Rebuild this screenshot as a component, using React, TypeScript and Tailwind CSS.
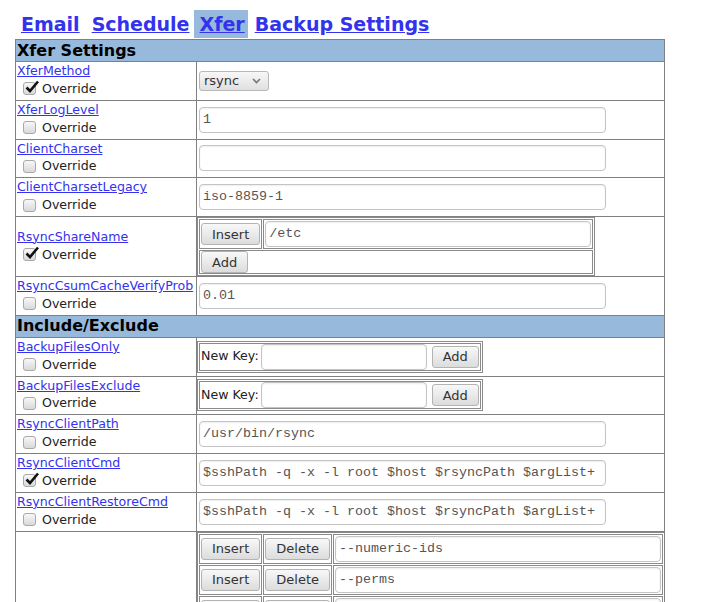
const SANS = "font-['DejaVu_Sans',Verdana,sans-serif]";
const MONO = "font-['Liberation_Mono',monospace]";
const LINK = "text-[#3333ee] underline";
const NEST = "border-separate border-spacing-[1px] border border-[#8a8a8a]";
const NCELL = "border border-[#8a8a8a] p-[1px]";

function Check({ on }: { on?: boolean }) {
  return (
    <span className="relative inline-block w-[13px] h-[13px] rounded-[3px] border border-[#a9a9a9] bg-gradient-to-b from-[#f7f7f7] to-[#d9d9d9]">
      {on && (
        <svg className="absolute -top-[4px] left-[1px]" width="15" height="15" viewBox="0 0 15 15">
          <path d="M1.5 8.5 L5 12 L13 2.5" fill="none" stroke="#111" strokeWidth="2.6" strokeLinejoin="miter" />
        </svg>
      )}
    </span>
  );
}

function Btn({ children }: { children: React.ReactNode }) {
  return (
    <span className="inline-flex items-center justify-center h-[22px] px-[10px] rounded-[3px] border border-[#b3b3b3] bg-gradient-to-b from-[#f8f8f8] to-[#dcdcdc] text-[#333] text-[13px] leading-none">
      {children}
    </span>
  );
}

function Field({ value, w }: { value: string; w: string }) {
  return (
    <div
      className={`${w} h-[26px] flex items-center px-[3px] rounded-[4px] border border-[#c4c4c4] bg-white ${MONO} text-[13.33px] text-[#555] shadow-[inset_0_1px_2px_rgba(0,0,0,0.07)] whitespace-pre`}
    >
      {value}
    </div>
  );
}

function Label({ name, on }: { name: string; on?: boolean }) {
  return (
    <td className="border border-[#808080] p-[1px] align-middle">
      <div className="leading-[16px]">
        <a className={LINK}>{name}</a>
      </div>
      <div className="flex items-center h-[19.75px] pl-[6px]">
        <Check on={on} />
        <span className="ml-[6px] leading-[16px]">Override</span>
      </div>
    </td>
  );
}

function Header({ title }: { title: string }) {
  return (
    <tr>
      <td colSpan={2} className="bg-[#96b9dc] border border-[#808080] px-[1px] h-[22px] text-[16px] font-bold leading-[20px] text-black">
        {title}
      </td>
    </tr>
  );
}

function TextRow({ name, value, on }: { name: string; value: string; on?: boolean }) {
  return (
    <tr>
      <Label name={name} on={on} />
      <td className="border border-[#808080] p-0 align-middle">
        <div className="ml-[2px]">
          <Field value={value} w="w-[407px]" />
        </div>
      </td>
    </tr>
  );
}

function NewKeyRow({ name }: { name: string }) {
  return (
    <tr>
      <Label name={name} />
      <td className="border border-[#808080] p-0 align-middle">
        <table className={NEST}>
          <tbody>
            <tr>
              <td className="border border-[#8a8a8a] px-[1px] py-0">
                <div className="flex items-center">
                  <span>New Key:</span>
                  <span className="ml-[2px]">
                    <Field value="" w="w-[166px]" />
                  </span>
                  <span className="ml-[5px]">
                    <Btn>Add</Btn>
                  </span>
                </div>
              </td>
            </tr>
          </tbody>
        </table>
      </td>
    </tr>
  );
}

const rsyncArgs = [
  "--numeric-ids",
  "--perms",
  "--owner",
  "--group",
  "-D",
  "--links",
  "--hard-links",
  "--times",
  "--block-size=2048",
  "--recursive",
];

export default function App() {
  return (
    <div className={`${SANS} text-[12.6px] text-[#222] bg-white min-h-screen`}>
      <div className="pt-[10px] pl-[21px] mb-[1px] flex items-center h-[38px] text-[19px] font-bold leading-[28px]">
        <a className={LINK}>Email</a>
        <a className={`${LINK} ml-[12px]`}>Schedule</a>
        <span className="ml-[4px] pl-[6px] pr-[3px] bg-[#96b9dc]">
          <a className={LINK}>Xfer</a>
        </span>
        <a className={`${LINK} ml-[7px]`}>Backup Settings</a>
      </div>

      <table className="ml-[15px] w-[650px] border-collapse table-fixed">
        <colgroup>
          <col className="w-[181px]" />
          <col />
        </colgroup>
        <tbody>
          <Header title="Xfer Settings" />
          <tr>
            <Label name="XferMethod" on />
            <td className="border border-[#808080] p-0 align-middle">
              <div className="ml-[2px] w-[70px] h-[20px] flex items-center justify-between pl-[4px] pr-[7px] rounded-[3px] border border-[#b8b8b8] bg-gradient-to-b from-[#f7f7f7] to-[#e0e0e0] text-[13px] text-[#333]">
                <span>rsync</span>
                <svg width="9" height="6" viewBox="0 0 9 6">
                  <path d="M1 1 L4.5 4.5 L8 1" fill="none" stroke="#777" strokeWidth="1.6" />
                </svg>
              </div>
            </td>
          </tr>
          <TextRow name="XferLogLevel" value="1" />
          <TextRow name="ClientCharset" value="" />
          <TextRow name="ClientCharsetLegacy" value="iso-8859-1" />
          <tr>
            <Label name="RsyncShareName" on />
            <td className="border border-[#808080] p-0 align-middle">
              <table className={NEST}>
                <tbody>
                  <tr>
                    <td className={NCELL}>
                      <Btn>Insert</Btn>
                    </td>
                    <td className={NCELL}>
                      <Field value="/etc" w="w-[326px]" />
                    </td>
                  </tr>
                  <tr>
                    <td colSpan={2} className="border border-[#8a8a8a] px-[1px] py-0">
                      <Btn>Add</Btn>
                    </td>
                  </tr>
                </tbody>
              </table>
            </td>
          </tr>
          <TextRow name="RsyncCsumCacheVerifyProb" value="0.01" />
          <Header title="Include/Exclude" />
          <NewKeyRow name="BackupFilesOnly" />
          <NewKeyRow name="BackupFilesExclude" />
          <TextRow name="RsyncClientPath" value="/usr/bin/rsync" />
          <TextRow name="RsyncClientCmd" value="$sshPath -q -x -l root $host $rsyncPath $argList+" on />
          <TextRow name="RsyncClientRestoreCmd" value="$sshPath -q -x -l root $host $rsyncPath $argList+" />
          <tr>
            <Label name="RsyncArgs" />
            <td className="border border-[#808080] p-0 align-top">
              <table className={`w-[467px] ${NEST}`}>
                <tbody>
                  {rsyncArgs.map((arg) => (
                    <tr key={arg}>
                      <td className={`w-[62px] ${NCELL}`}>
                        <Btn>Insert</Btn>
                      </td>
                      <td className={`w-[68px] ${NCELL}`}>
                        <Btn>Delete</Btn>
                      </td>
                      <td className={NCELL}>
                        <Field value={arg} w="w-[326px]" />
                      </td>
                    </tr>
                  ))}
                  <tr>
                    <td colSpan={3} className={NCELL}>
                      <Btn>Add</Btn>
                    </td>
                  </tr>
                </tbody>
              </table>
            </td>
          </tr>
        </tbody>
      </table>
    </div>
  );
}
